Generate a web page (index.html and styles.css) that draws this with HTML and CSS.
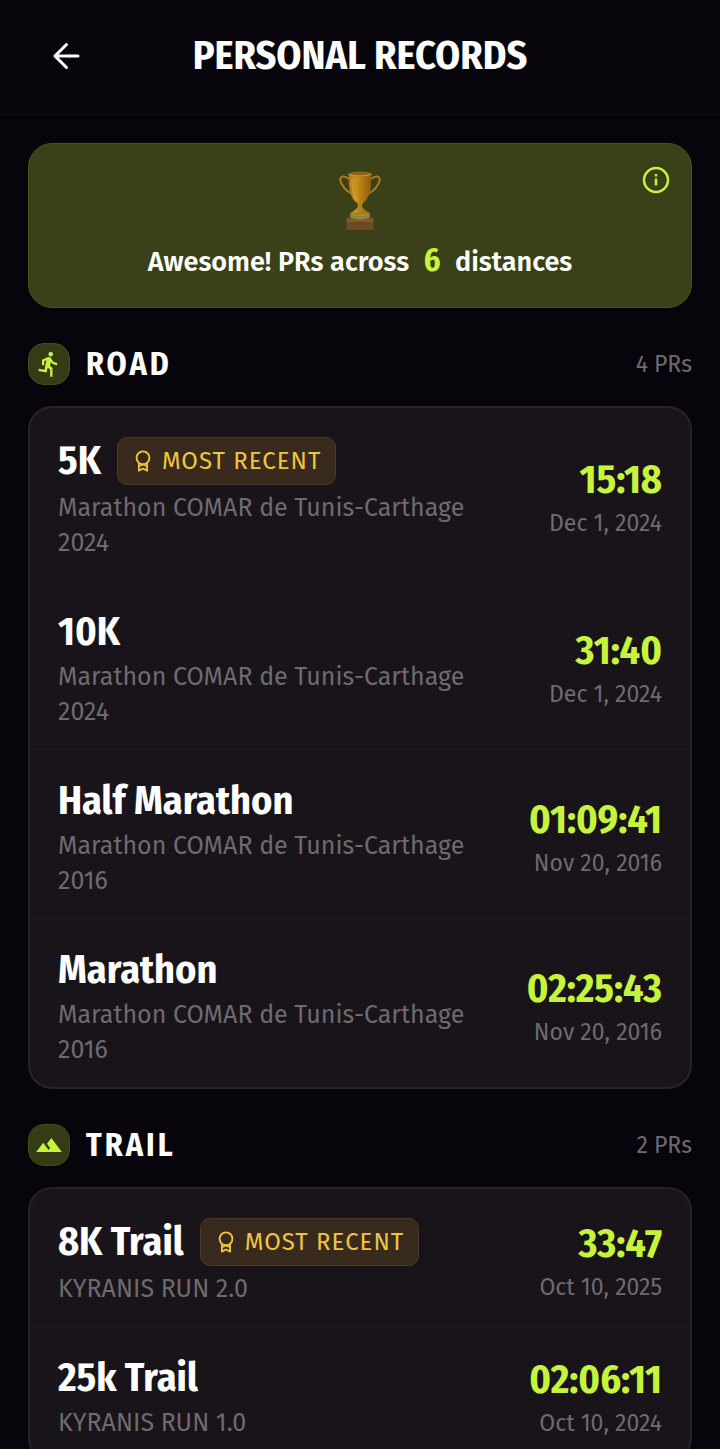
FILE: index.html
```html
<!DOCTYPE html>
<html lang="en">
<head>
    <meta charset="UTF-8">
    <meta name="viewport" content="width=device-width, initial-scale=1.0">
    <title>Personal Records</title>
    <link rel="stylesheet" href="styles.css">
</head>
<body>
    <!-- shared icon -->
    <svg class="sprite" aria-hidden="true">
        <symbol id="award" viewBox="0 0 24 24">
            <circle cx="12" cy="8.500" r="7"/>
            <path d="M7.500 14v8.500l4.500-2.300 4.500 2.300V14"/>
            <path d="M7.500 17.500l4.500-1.700 4.500 1.700"/>
        </symbol>
    </svg>

    <div class="app">
        <header class="header">
            <button type="button" class="back-btn" aria-label="Back">
                <svg viewBox="0 0 28 28"><path d="M26 14H3M14.500 2.500L3 14l11.500 11.500"/></svg>
            </button>
            <h1>PERSONAL RECORDS</h1>
        </header>

        <main class="content">
            <section class="banner">
                <button type="button" class="info-btn" aria-label="Info">
                    <svg viewBox="0 0 28 28">
                        <circle cx="14" cy="14" r="12"/>
                        <path d="M14 12.500v7M14 8v2.600"/>
                    </svg>
                </button>
                <svg class="trophy" viewBox="0 0 48 60" aria-hidden="true">
                    <defs>
                        <linearGradient id="gold" x1="0" x2="1">
                            <stop offset="0" stop-color="#a86f12"/>
                            <stop offset="0.3" stop-color="#c99321"/>
                            <stop offset="0.6" stop-color="#b27a10"/>
                            <stop offset="1" stop-color="#8c5a10"/>
                        </linearGradient>
                    </defs>
                    <path class="handle" d="M13 8C8 4 3 5 4.500 10s6 10 11.500 13M35 8c5-4 10-3 8.500 2s-6 10-11.500 13"/>
                    <path d="M12.500 3c0 15 1.500 24 8.500 29l1 3c-1 4-7 5-7 8h18c0-3-6-4-7-8l1-3c7-5 8.500-14 8.500-29z" fill="url(#gold)"/>
                    <ellipse cx="24" cy="3" rx="11.500" ry="2.500" fill="#8f6214"/>
                    <path d="M12.500 3c3 2.500 20 2.500 23 0" fill="none" stroke="#cda037"/>
                    <path d="M16 8c0 10 2 17 5 21" fill="none" stroke="#d4a63f" stroke-width="2" opacity="0.6"/>
                    <path d="M10.500 47h27v12h-27z" fill="#6b4a21"/>
                    <path d="M10.500 47h27v4h-27z" fill="#7c582a"/>
                    <ellipse cx="24" cy="45" rx="10.500" ry="3.500" fill="#8d8343"/>
                    <path d="M14.500 42c4 3 15 3 19 0" fill="none" stroke="#b6851f" stroke-width="2"/>
                </svg>
                <p class="banner-text">Awesome! PRs across <strong>6</strong> distances</p>
            </section>

            <section class="group">
                <div class="group-head">
                    <span class="group-icon">
                        <svg viewBox="0 0 24 24"><path d="M13.490 5.480c1.100 0 2-.9 2-2s-.9-2-2-2-2 .9-2 2 .9 2 2 2zm-3.600 13.900l1-4.400 2.100 2v6h2v-7.500l-2.100-2 .6-3c1.300 1.500 3.300 2.500 5.500 2.500v-2c-1.900 0-3.500-1-4.300-2.400l-1-1.600c-.4-.6-1-1-1.700-1-.3 0-.5.1-.8.1l-5.200 2.200v4.700h2v-3.400l1.800-.7-1.600 8.100-4.900-1-.4 2 7 1.400z"/></svg>
                    </span>
                    <h2>ROAD</h2>
                    <span class="count">4 PRs</span>
                </div>
                <ul class="card">
                    <li class="record">
                        <div class="race">
                            <div class="race-title">
                                <h3>5K</h3>
                                <span class="badge"><svg><use href="#award"/></svg>MOST RECENT</span>
                            </div>
                            <p>Marathon COMAR de Tunis-Carthage 2024</p>
                        </div>
                        <div class="result">
                            <span class="time">15:18</span>
                            <span class="date">Dec 1, 2024</span>
                        </div>
                    </li>
                    <li class="record">
                        <div class="race">
                            <h3>10K</h3>
                            <p>Marathon COMAR de Tunis-Carthage 2024</p>
                        </div>
                        <div class="result">
                            <span class="time">31:40</span>
                            <span class="date">Dec 1, 2024</span>
                        </div>
                    </li>
                    <li class="record">
                        <div class="race">
                            <h3>Half Marathon</h3>
                            <p>Marathon COMAR de Tunis-Carthage 2016</p>
                        </div>
                        <div class="result">
                            <span class="time">01:09:41</span>
                            <span class="date">Nov 20, 2016</span>
                        </div>
                    </li>
                    <li class="record">
                        <div class="race">
                            <h3>Marathon</h3>
                            <p>Marathon COMAR de Tunis-Carthage 2016</p>
                        </div>
                        <div class="result">
                            <span class="time">02:25:43</span>
                            <span class="date">Nov 20, 2016</span>
                        </div>
                    </li>
                </ul>
            </section>

            <section class="group">
                <div class="group-head">
                    <span class="group-icon">
                        <svg viewBox="0 0 24 24"><path d="M14 6l-3.750 5 2.850 3.800-1.600 1.200C9.810 13.750 7 10 7 10l-6 8h22L14 6z"/></svg>
                    </span>
                    <h2>TRAIL</h2>
                    <span class="count">2 PRs</span>
                </div>
                <ul class="card">
                    <li class="record">
                        <div class="race">
                            <div class="race-title">
                                <h3>8K Trail</h3>
                                <span class="badge"><svg><use href="#award"/></svg>MOST RECENT</span>
                            </div>
                            <p>KYRANIS RUN 2.0</p>
                        </div>
                        <div class="result">
                            <span class="time">33:47</span>
                            <span class="date">Oct 10, 2025</span>
                        </div>
                    </li>
                    <li class="record">
                        <div class="race">
                            <h3>25k Trail</h3>
                            <p>KYRANIS RUN 1.0</p>
                        </div>
                        <div class="result">
                            <span class="time">02:06:11</span>
                            <span class="date">Oct 10, 2024</span>
                        </div>
                    </li>
                </ul>
            </section>
        </main>
    </div>
</body>
</html>
```

FILE: styles.css
```css
* {
    margin: 0;
    padding: 0;
    box-sizing: border-box;
}

body {
    font-family: 'Fira Sans', 'Noto Sans', sans-serif;
    background: #07040c;
    color: #fff;
}

button {
    background: none;
    border: none;
    color: inherit;
    cursor: pointer;
}

svg {
    display: block;
}

.sprite {
    display: none;
}

.app {
    height: 100vh;
    overflow-y: auto;
    scrollbar-width: none;
}

/* Header */
.header {
    display: grid;
    grid-template-columns: 56px 1fr 56px;
    align-items: center;
    padding: 29px 38px 31px;
    border-bottom: 1px solid #0d0a12;
}

h1,
h2,
h3,
.time,
.banner-text strong {
    font-family: 'Fira Sans Condensed', 'Fira Sans', 'Noto Sans', sans-serif;
    font-weight: 700;
    white-space: nowrap;
}

.header h1 {
    font-size: 40px;
    line-height: 54px;
    text-align: center;
}

.back-btn {
    display: grid;
    place-items: center;
    height: 54px;
}

.back-btn svg {
    width: 28px;
    height: 28px;
    fill: none;
    stroke: #fff;
    stroke-width: 3;
    stroke-linecap: round;
    stroke-linejoin: round;
}

.content {
    padding: 28px;
}

/* Summary banner */
.banner {
    position: relative;
    padding: 27px 24px 25px;
    background: #3a4017;
    border: 1px solid #4b531b;
    border-radius: 24px;
}

.trophy {
    width: 48px;
    height: 60px;
    margin: 0 auto 12px;
}

.trophy .handle {
    fill: none;
    stroke: #aa7c20;
    stroke-width: 2;
}

.banner-text {
    font-size: 27px;
    line-height: 39px;
    font-weight: 600;
    text-align: center;
}

.banner-text strong {
    margin: 0 8px;
    font-size: 32px;
    line-height: 32px;
    color: #c6f43c;
}

.info-btn {
    position: absolute;
    top: 22px;
    right: 21px;
}

.info-btn svg {
    width: 28px;
    height: 28px;
    fill: none;
    stroke: #c6f43c;
    stroke-width: 2.5;
}

/* Record groups */
.group {
    margin-top: 35px;
}

.group-head {
    display: flex;
    align-items: center;
    gap: 16px;
    margin-bottom: 21px;
}

.group-icon {
    display: grid;
    place-items: center;
    width: 42px;
    height: 42px;
    background: #343b15;
    border: 1px solid #454d1b;
    border-radius: 16px;
}

.group-icon svg {
    width: 28px;
    height: 28px;
    fill: #c6f43c;
}

.group-head h2 {
    font-size: 32px;
    line-height: 42px;
    letter-spacing: 3px;
}

.count {
    margin-left: auto;
    font-size: 23px;
    color: #6d6a70;
}

.card {
    list-style: none;
    background: #19141a;
    border: 2px solid #272329;
    border-radius: 24px;
}

.record {
    display: flex;
    align-items: center;
    justify-content: space-between;
    gap: 40px;
    padding: 28px 28px 19px;
}

.record + .record {
    border-top: 1px solid #1f1a20;
}

.race-title {
    display: flex;
    align-items: center;
    gap: 16px;
}

.race h3,
.time {
    font-size: 40px;
    line-height: 46px;
}

.race p {
    margin-top: 5px;
    font-size: 25px;
    line-height: 35px;
    color: #6d6a70;
}

.badge {
    display: flex;
    align-items: center;
    gap: 8px;
    height: 48px;
    margin: 1px 0;
    padding: 0 14px;
    background: #382b1d;
    border: 1px solid #4a3b25;
    border-radius: 10px;
    color: #f0c443;
    font-size: 24px;
    letter-spacing: 1px;
    white-space: nowrap;
}

.badge svg {
    width: 22px;
    height: 24px;
    fill: none;
    stroke: #f0c443;
    stroke-width: 2;
    stroke-linejoin: round;
}

.result {
    display: flex;
    flex-direction: column;
    gap: 5px;
    margin-bottom: 2px;
    text-align: right;
    white-space: nowrap;
}

.time {
    color: #c6f43c;
}

.date {
    font-size: 23px;
    line-height: 30px;
    color: #6d6a70;
}
```
